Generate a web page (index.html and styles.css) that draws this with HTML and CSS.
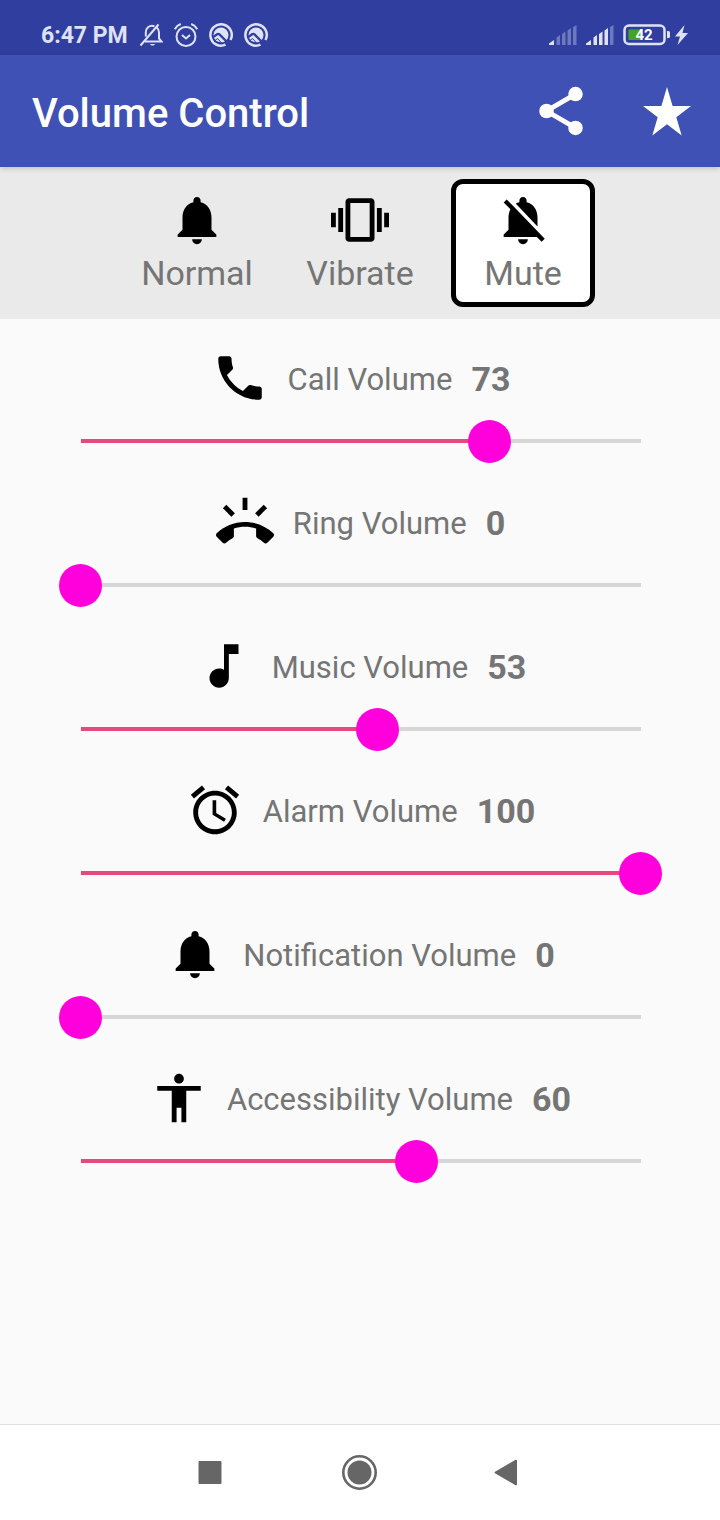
FILE: index.html
```html
<!DOCTYPE html>
<html lang="en">
<head>
    <meta charset="UTF-8">
    <meta name="viewport" content="width=device-width, initial-scale=1.0">
    <title>Volume Control</title>
    <link rel="stylesheet" href="styles.css">
</head>
<body>
    <div class="statusbar">
        <span class="time">6:47 PM</span>
        <div class="status-icons">
            <svg width="24" height="24" viewBox="0 0 24 24" fill="none" stroke="currentColor" stroke-width="2">
                <path d="M6 18.500h16.500l-2.500-3V9.500c0-2-.8-3.800-2.200-5M15.500 3.200C10.500 1.500 6.800 5 6.800 9.500v4M1.500 22.500L19.500 1.500"/>
                <path d="M11 21c1 2 4 2 5 0z" fill="currentColor" stroke="none"/>
            </svg>
            <svg width="24" height="24" viewBox="0 0 24 24" fill="none" stroke="currentColor" stroke-width="2">
                <circle cx="12" cy="13.500" r="9.500"/>
                <path d="M8 12l4 3.500 4-3.500M.8 6.200C2 3.800 4 2 6.800 1M23.200 6.200C22 3.800 20 2 17.200 1"/>
            </svg>
            <svg width="24" height="24" viewBox="0 0 24 24" fill="none" stroke="currentColor">
                <path d="M16.500 21.700A10.700 10.700 0 1 1 21.500 17" stroke-width="2.500"/>
                <circle cx="12" cy="12" r="7.500" fill="currentColor" stroke="none"/>
                <path class="cut" d="M3.500 14.500l5-3.500q1-.6 2 .4L20 21" stroke-width="2.200"/>
                <path class="cut" d="M5 18.500l3.500-3 4 4.500z"/>
            </svg>
            <svg width="24" height="24" viewBox="0 0 24 24" fill="none" stroke="currentColor">
                <path d="M16.500 21.700A10.700 10.700 0 1 1 21.500 17" stroke-width="2.500"/>
                <circle cx="12" cy="12" r="7.500" fill="currentColor" stroke="none"/>
                <path class="cut" d="M3.500 14.500l5-3.500q1-.6 2 .4L20 21" stroke-width="2.200"/>
                <path class="cut" d="M5 18.500l3.500-3 4 4.500z"/>
            </svg>
        </div>
        <div class="status-right">
            <svg width="28" height="20" viewBox="0 0 28 20" fill="currentColor">
                <path d="M0 20v-1.500L5 15v5z"/>
                <path class="dim" d="M7.500 20v-7.500L11 10v10zM13 20V9l3.500-2.500V20zM18.500 20V5.500L22 3v17zM24 20V2l3.500-2v20z"/>
            </svg>
            <svg width="28" height="20" viewBox="0 0 28 20" fill="currentColor">
                <path d="M0 20v-1.500L5 15v5zM7.500 20v-7.500L11 10v10zM13 20V9l3.500-2.500V20zM18.500 20V5.500L22 3v17z"/>
                <path class="dim" d="M24 20V2l3.500-2v20z"/>
            </svg>
            <svg class="battery" width="47" height="22" viewBox="0 0 47 22">
                <rect x="1.500" y="1.500" width="40" height="18.500" rx="4.500" fill="none" stroke="currentColor" stroke-width="2.500"/>
                <rect x="5.500" y="5.500" width="13" height="10.500" rx="1" fill="#43a524"/>
                <path d="M44 7h1.500q1.500 0 1.500 1.500v4q0 1.500-1.500 1.500H44z" fill="currentColor"/>
                <text x="21" y="16" text-anchor="middle">42</text>
            </svg>
            <svg class="bolt" width="13" height="20" viewBox="0 0 13 20" fill="currentColor"><path d="M9.500 0L0 11.500h5L2.500 20 13 8H7.500z"/></svg>
        </div>
    </div>

    <header class="appbar">
        <h1>Volume Control</h1>
        <button class="icon-button" aria-label="Share">
            <svg class="icon" viewBox="0 0 24 24" fill="none" stroke="currentColor">
                <path d="M18 5L6 12l12 7" stroke-width="2"/>
                <g fill="currentColor" stroke="none"><circle cx="18" cy="5" r="3"/><circle cx="6" cy="12" r="3"/><circle cx="18" cy="19" r="3"/></g>
            </svg>
        </button>
        <button class="icon-button" aria-label="Rate">
            <svg class="icon" viewBox="0 0 58 58" fill="currentColor"><path d="M29 5l5.600 19H53L38.300 35.300 43.700 53.500 29 42.300 14.300 53.500l5.400-18.200L5 24h18.400z"/></svg>
        </button>
    </header>

    <div class="modes">
        <button class="mode" aria-pressed="false">
            <svg class="icon" viewBox="0 0 24 24"><path d="M12 22c1.100 0 2-.9 2-2h-4c0 1.100.9 2 2 2zm6-6v-5c0-3.070-1.640-5.640-4.500-6.320V4c0-.83-.67-1.500-1.500-1.500s-1.500.67-1.500 1.500v.68C7.630 5.360 6 7.920 6 11v5l-2 2v1h16v-1l-2-2z"/></svg>
            <span>Normal</span>
        </button>
        <button class="mode" aria-pressed="false">
            <svg class="icon" viewBox="0 0 24 24"><path d="M0 15h2V9H0v6zm3 2h2V7H3v10zm19-8v6h2V9h-2zm-3 8h2V7h-2v10zM16.500 3h-9C6.670 3 6 3.670 6 4.500v15c0 .83.67 1.500 1.500 1.500h9c.83 0 1.500-.67 1.500-1.500v-15c0-.83-.67-1.500-1.500-1.500zM16 19H8V5h8v14z"/></svg>
            <span>Vibrate</span>
        </button>
        <button class="mode" aria-pressed="true">
            <svg class="icon" viewBox="0 0 24 24"><path d="M20 18.690L7.840 6.140 5.270 3.490 4 4.760l2.800 2.800v.01c-.52.99-.8 2.160-.8 3.420v5l-2 2v1h13.730l2 2L21 19.720l-1-1.030zM12 22c1.110 0 2-.89 2-2h-4c0 1.110.89 2 2 2zm6-7.320V11c0-3.080-1.640-5.640-4.500-6.320V4c0-.83-.67-1.500-1.500-1.500s-1.500.67-1.500 1.500v.68c-.15.03-.29.08-.42.12-.1.03-.2.07-.3.11-.24.09-.48.2-.71.32L18 14.680z"/></svg>
            <span>Mute</span>
        </button>
    </div>

    <main class="volumes">
        <div class="volume">
            <div class="volume-title">
                <svg class="icon" viewBox="0 0 24 24"><path d="M6.620 10.790c1.440 2.830 3.760 5.140 6.590 6.590l2.200-2.200c.27-.27.67-.36 1.020-.24 1.120.37 2.330.57 3.570.57.55 0 1 .45 1 1V20c0 .55-.45 1-1 1-9.390 0-17-7.610-17-17 0-.55.45-1 1-1h3.500c.55 0 1 .45 1 1 0 1.250.2 2.450.57 3.570.11.35.03.74-.25 1.020l-2.200 2.200z"/></svg>
                <label for="call">Call Volume</label>
                <output for="call">73</output>
            </div>
            <input type="range" id="call" min="0" max="100" value="73">
        </div>
        <div class="volume">
            <div class="volume-title">
                <svg class="icon" viewBox="0 0 24 24"><path d="M23.710 16.670C20.660 13.780 16.540 12 12 12 7.460 12 3.340 13.780.29 16.670c-.18.18-.29.43-.29.71 0 .28.11.53.29.71l2.480 2.480c.18.18.43.29.71.29.27 0 .52-.11.7-.28.79-.74 1.690-1.360 2.660-1.850.33-.16.56-.5.56-.9v-3.100c1.450-.48 3-.73 4.600-.73s3.150.25 4.600.72v3.100c0 .39.23.74.56.9.98.49 1.870 1.120 2.660 1.850.18.18.43.28.7.28.28 0 .53-.11.71-.29l2.480-2.480c.18-.18.29-.43.29-.71 0-.28-.12-.52-.3-.7zM21.160 6.260l-1.410-1.410-3.560 3.550 1.410 1.410s3.450-3.520 3.560-3.550zM13 2h-2v5h2V2zM6.400 9.810L7.810 8.400 4.260 4.840 2.840 6.260c.11.03 3.560 3.550 3.560 3.550z"/></svg>
                <label for="ring">Ring Volume</label>
                <output for="ring">0</output>
            </div>
            <input type="range" id="ring" min="0" max="100" value="0">
        </div>
        <div class="volume">
            <div class="volume-title">
                <svg class="icon" viewBox="0 0 24 24"><path d="M12 3v10.550c-.59-.34-1.270-.55-2-.55-2.210 0-4 1.790-4 4s1.790 4 4 4 4-1.790 4-4V7h4V3h-6z"/></svg>
                <label for="music">Music Volume</label>
                <output for="music">53</output>
            </div>
            <input type="range" id="music" min="0" max="100" value="53">
        </div>
        <div class="volume">
            <div class="volume-title">
                <svg class="icon" viewBox="0 0 24 24"><path d="M22 5.720l-4.600-3.860-1.290 1.530 4.600 3.860L22 5.720zM7.880 3.390L6.600 1.860 2 5.710l1.290 1.530 4.590-3.850zM12.500 8H11v6l4.750 2.850.75-1.230-4-2.370V8zM12 4c-4.970 0-9 4.030-9 9s4.020 9 9 9c4.970 0 9-4.030 9-9s-4.030-9-9-9zm0 16c-3.870 0-7-3.130-7-7s3.130-7 7-7 7 3.130 7 7-3.130 7-7 7z"/></svg>
                <label for="alarm">Alarm Volume</label>
                <output for="alarm">100</output>
            </div>
            <input type="range" id="alarm" min="0" max="100" value="100">
        </div>
        <div class="volume">
            <div class="volume-title">
                <svg class="icon" viewBox="0 0 24 24"><path d="M12 22c1.100 0 2-.9 2-2h-4c0 1.100.9 2 2 2zm6-6v-5c0-3.070-1.640-5.640-4.500-6.320V4c0-.83-.67-1.500-1.500-1.500s-1.500.67-1.500 1.500v.68C7.630 5.360 6 7.920 6 11v5l-2 2v1h16v-1l-2-2z"/></svg>
                <label for="notification">Notification Volume</label>
                <output for="notification">0</output>
            </div>
            <input type="range" id="notification" min="0" max="100" value="0">
        </div>
        <div class="volume">
            <div class="volume-title">
                <svg class="icon" viewBox="0 0 24 24"><path d="M12 2c1.100 0 2 .9 2 2s-.9 2-2 2-2-.9-2-2 .9-2 2-2zm9 7h-6v13h-2v-6h-2v6H9V9H3V7h18v2z"/></svg>
                <label for="accessibility">Accessibility Volume</label>
                <output for="accessibility">60</output>
            </div>
            <input type="range" id="accessibility" min="0" max="100" value="60">
        </div>
    </main>

    <nav class="navbar">
        <button aria-label="Recent apps"><svg width="48" height="48" viewBox="0 0 48 48"><rect x="12.500" y="12" width="23" height="23" rx="1"/></svg></button>
        <button aria-label="Home"><svg width="48" height="48" viewBox="0 0 48 48"><circle cx="23.500" cy="23.500" r="16.200" fill="none" stroke="currentColor" stroke-width="2.600"/><circle cx="23.500" cy="23.500" r="12"/></svg></button>
        <button aria-label="Back"><svg width="48" height="48" viewBox="0 0 48 48"><path d="M9 22.700L29.500 10.800q1.500-.6 1.500 1v23.400q0 1.600-1.500 1L9 24.300q-1-.8 0-1.600z"/></svg></button>
    </nav>

    <script>
        const sliders = document.querySelectorAll('input[type="range"]');
        const modes = document.querySelectorAll('.mode');

        function updateSlider(slider) {
            slider.style.setProperty('--value', slider.value + '%');
            document.querySelector(`output[for="${slider.id}"]`).textContent = slider.value;
        }

        sliders.forEach(slider => {
            updateSlider(slider);
            slider.addEventListener('input', () => updateSlider(slider));
        });

        modes.forEach(mode => {
            mode.addEventListener('click', () => {
                modes.forEach(m => m.setAttribute('aria-pressed', m === mode));
            });
        });
    </script>
</body>
</html>
```
FILE: styles.css
```css
* {box-sizing: border-box;}
body {margin: 0; min-height: 100vh; display: flex; flex-direction: column; font-family: Roboto, sans-serif; background-color: #fafafa; color: #757575;}
button {border: 0; padding: 0; background: none; font: inherit; color: inherit; cursor: pointer;}
svg {display: block; flex: none;}
.icon {width: 58px; height: 58px;}

.statusbar {display: flex; align-items: center; height: 55px; padding: 15px 32px 0 41px; background-color: #303f9f; color: #dfe2f6;}
.time {font-size: 23px; font-weight: 700; line-height: 32px; padding-top: 1px;}
.status-icons {display: flex; gap: 11px; margin-left: 11px;}
.status-right {display: flex; align-items: center; gap: 9px; margin-left: auto;}
.dim {opacity: 0.35;}
.cut {stroke: #303f9f;}
.battery text {font-size: 15px; font-weight: 700; fill: #fff;}
.bolt {margin-left: -4px;}

.appbar {display: flex; align-items: center; gap: 48px; height: 112px; padding: 0 24px 0 32px; background-color: #3f51b5; color: #fff; box-shadow: 0 1px 6px rgba(0, 0, 0, 0.2); z-index: 1;}
.appbar h1 {flex: 1; margin: 0; padding-top: 4px; font-size: 40px; font-weight: 500;}

.modes {display: flex; justify-content: center; gap: 19px; padding: 12px; background-color: #eaeaea;}
.mode {display: flex; flex-direction: column; align-items: center; width: 144px; padding: 7px 0 5px; border: 5px solid transparent; border-radius: 12px; font-size: 34px; line-height: 48px;}
.mode .icon {fill: #000;}
.mode[aria-pressed="true"] {border-color: #000; background-color: #fff;}

.volumes {flex: 1; display: flex; flex-direction: column; gap: 30px; padding: 30px 58px 30px 59px;}
.volume-title {display: flex; align-items: center; justify-content: center; gap: 19px; height: 58px; margin-bottom: 13px;}
.volume-title .icon {fill: #000;}
.volume-title label {padding-top: 2px; font-size: 31px;}
.volume-title output {padding-top: 2px; font-size: 34px; font-weight: 700;}

/* the track stops half a thumb short of each end */
input[type="range"] {appearance: none; display: block; width: 100%; height: 43px; margin: 0; background: linear-gradient(to right, #e9487f var(--value), #d6d6d6 var(--value)) 50% 19px / calc(100% - 43px) 4px no-repeat;}
input[type="range"]::-webkit-slider-thumb {appearance: none; width: 43px; height: 43px; border-radius: 50%; background-color: #ff00dc;}
input[type="range"]::-moz-range-thumb {width: 43px; height: 43px; border: 0; border-radius: 50%; background-color: #ff00dc;}

.navbar {display: flex; align-items: center; justify-content: center; gap: 102px; height: 96px; border-top: 1px solid #e0e0e0; background-color: #fff; color: #666;}
.navbar svg {fill: currentColor;}
```
